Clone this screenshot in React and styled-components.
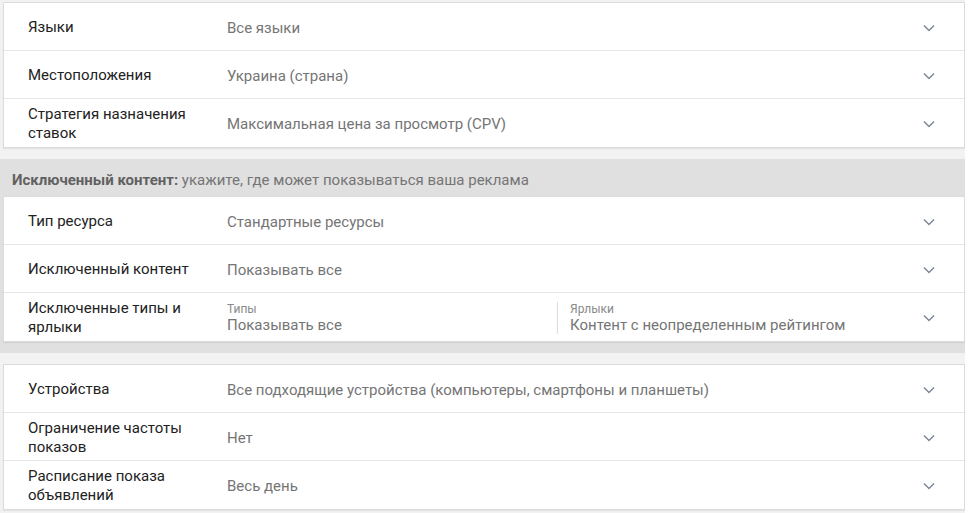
import styled, { createGlobalStyle } from 'styled-components'

const GlobalStyle = createGlobalStyle`
    body {
        margin: 0;
        background: #ffffff;
        font-family: Roboto, "Noto Sans", Arial, sans-serif;
    }
`;

const Page = styled.div`
    width: 965px;
    min-height: 513px;
    background: #f2f2f2;
    padding-top: 2px;
    box-sizing: border-box;
`;

const Card = styled.div`
    margin-left: 3px;
    padding-bottom: 1px;
    background: #ffffff;
    border: 1px solid #dcdcdc;
    box-shadow: 0 1px 1px rgba(0, 0, 0, 0.06);
`;

const Row = styled.div`
    display: flex;
    align-items: center;
    height: 45px;
    padding-top: 2px;
    border-top: ${props => props.first ? "none" : "1px solid #e6e6e6"};
    cursor: pointer;
`;

const Label = styled.div`
    width: 175px;
    padding-left: 24px;
    margin-right: 24px;
    font-size: 15px;
    line-height: 19px;
    color: #222222;
`;

const Value = styled.div`
    flex: 1;
    font-size: 15px;
    color: #757575;
    white-space: nowrap;
`;

const Split = styled.div`
    flex: 1;
    display: flex;
    align-items: stretch;
`;

const SubField = styled.div`
    width: ${props => props.width || "auto"};
    flex: ${props => props.width ? "none" : 1};
    padding-left: ${props => props.divided ? "12px" : "0"};
    border-left: ${props => props.divided ? "1px solid #dcdcdc" : "none"};
    display: flex;
    flex-direction: column;
    justify-content: center;
    min-height: 32px;
`;

const SubLabel = styled.div`
    font-size: 12px;
    color: #8a8a8a;
    line-height: 14px;
`;

const SubValue = styled.div`
    font-size: 15px;
    color: #757575;
    line-height: 18px;
`;

const Chevron = styled.div`
    width: 12px;
    margin: 0 29px 0 16px;
    display: flex;
    align-items: center;
    color: #7d8795;
`;

const Section = styled.div`
    margin-top: 11px;
    background: #e0e0e0;
    padding-bottom: 11px;
`;

const SectionHeader = styled.div`
    height: 37px;
    padding: 12px 0 0 12px;
    box-sizing: border-box;
    font-size: 15px;
    color: #757575;
    b {
        color: #616161;
        font-weight: 700;
    }
`;

const Gap = styled.div`
    height: 11px;
`;

const Arrow = () => (
    <Chevron>
        <svg width="12" height="8" viewBox="0 0 12 8">
            <polyline points="1,1.5 6,6.5 11,1.5" fill="none" stroke="currentColor" strokeWidth="1.5" />
        </svg>
    </Chevron>
);

const SettingRow = ({ label, value, first }) => (
    <Row first={first}>
        <Label>{label}</Label>
        <Value>{value}</Value>
        <Arrow />
    </Row>
);

const App = () => {
    return (
        <Page>
            <GlobalStyle />
            <Card>
                <SettingRow first label="Языки" value="Все языки" />
                <SettingRow label="Местоположения" value="Украина (страна)" />
                <SettingRow label="Стратегия назначения ставок" value="Максимальная цена за просмотр (CPV)" />
            </Card>
            <Section>
                <SectionHeader>
                    <b>Исключенный контент:</b> укажите, где может показываться ваша реклама
                </SectionHeader>
                <Card>
                    <SettingRow first label="Тип ресурса" value="Стандартные ресурсы" />
                    <SettingRow label="Исключенный контент" value="Показывать все" />
                    <Row>
                        <Label>Исключенные типы и ярлыки</Label>
                        <Split>
                            <SubField width="330px">
                                <SubLabel>Типы</SubLabel>
                                <SubValue>Показывать все</SubValue>
                            </SubField>
                            <SubField divided>
                                <SubLabel>Ярлыки</SubLabel>
                                <SubValue>Контент с неопределенным рейтингом</SubValue>
                            </SubField>
                        </Split>
                        <Arrow />
                    </Row>
                </Card>
            </Section>
            <Gap />
            <Card>
                <SettingRow first label="Устройства" value="Все подходящие устройства (компьютеры, смартфоны и планшеты)" />
                <SettingRow label="Ограничение частоты показов" value="Нет" />
                <SettingRow label="Расписание показа объявлений" value="Весь день" />
            </Card>
        </Page>
    )
}

export default App
